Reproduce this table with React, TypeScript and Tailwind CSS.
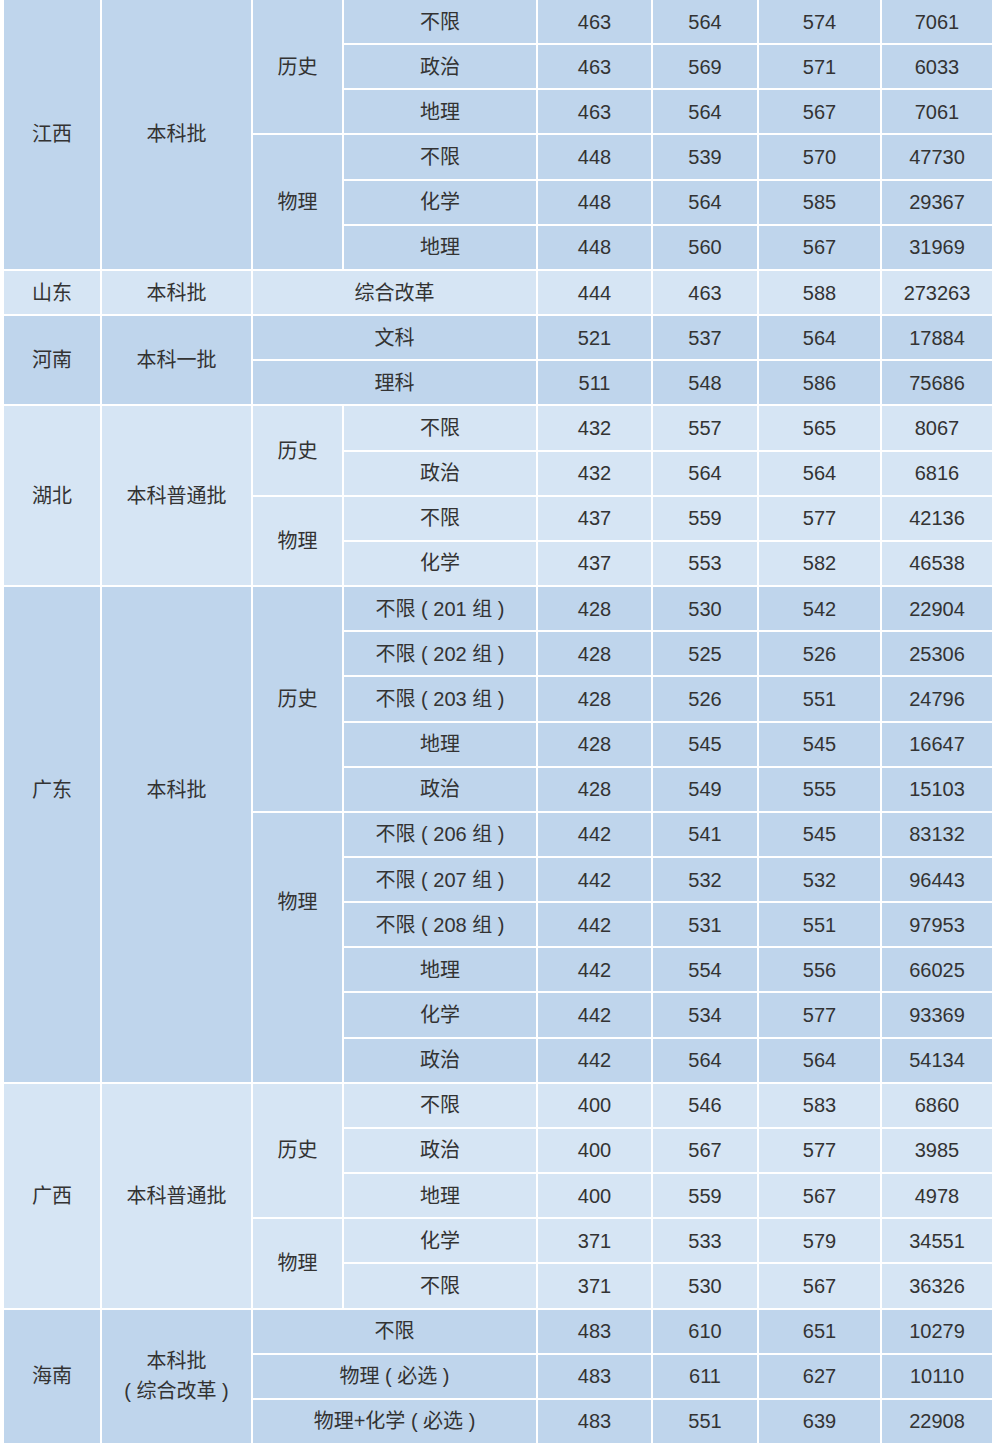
type Row = { sub: string; v: [string, string, string, string] }
type Sub = { name?: string; lift?: string; rows: Row[] }
type Group = { prov: string; batch: string[]; dark: boolean; lift?: string; subs: Sub[] }

const groups: Group[] = [
  {
    prov: '江西', batch: ['本科批'], dark: true,
    subs: [
      { name: '历史', rows: [
        { sub: '不限', v: ['463', '564', '574', '7061'] },
        { sub: '政治', v: ['463', '569', '571', '6033'] },
        { sub: '地理', v: ['463', '564', '567', '7061'] },
      ] },
      { name: '物理', rows: [
        { sub: '不限', v: ['448', '539', '570', '47730'] },
        { sub: '化学', v: ['448', '564', '585', '29367'] },
        { sub: '地理', v: ['448', '560', '567', '31969'] },
      ] },
    ],
  },
  {
    prov: '山东', batch: ['本科批'], dark: false,
    subs: [{ rows: [{ sub: '综合改革', v: ['444', '463', '588', '273263'] }] }],
  },
  {
    prov: '河南', batch: ['本科一批'], dark: true,
    subs: [{ rows: [
      { sub: '文科', v: ['521', '537', '564', '17884'] },
      { sub: '理科', v: ['511', '548', '586', '75686'] },
    ] }],
  },
  {
    prov: '湖北', batch: ['本科普通批'], dark: false,
    subs: [
      { name: '历史', rows: [
        { sub: '不限', v: ['432', '557', '565', '8067'] },
        { sub: '政治', v: ['432', '564', '564', '6816'] },
      ] },
      { name: '物理', rows: [
        { sub: '不限', v: ['437', '559', '577', '42136'] },
        { sub: '化学', v: ['437', '553', '582', '46538'] },
      ] },
    ],
  },
  {
    prov: '广东', batch: ['本科批'], dark: true, lift: 'pb-[88px]',
    subs: [
      { name: '历史', rows: [
        { sub: '不限 ( 201 组 )', v: ['428', '530', '542', '22904'] },
        { sub: '不限 ( 202 组 )', v: ['428', '525', '526', '25306'] },
        { sub: '不限 ( 203 组 )', v: ['428', '526', '551', '24796'] },
        { sub: '地理', v: ['428', '545', '545', '16647'] },
        { sub: '政治', v: ['428', '549', '555', '15103'] },
      ] },
      { name: '物理', lift: 'pb-[90px]', rows: [
        { sub: '不限 ( 206 组 )', v: ['442', '541', '545', '83132'] },
        { sub: '不限 ( 207 组 )', v: ['442', '532', '532', '96443'] },
        { sub: '不限 ( 208 组 )', v: ['442', '531', '551', '97953'] },
        { sub: '地理', v: ['442', '554', '556', '66025'] },
        { sub: '化学', v: ['442', '534', '577', '93369'] },
        { sub: '政治', v: ['442', '564', '564', '54134'] },
      ] },
    ],
  },
  {
    prov: '广西', batch: ['本科普通批'], dark: false,
    subs: [
      { name: '历史', rows: [
        { sub: '不限', v: ['400', '546', '583', '6860'] },
        { sub: '政治', v: ['400', '567', '577', '3985'] },
        { sub: '地理', v: ['400', '559', '567', '4978'] },
      ] },
      { name: '物理', rows: [
        { sub: '化学', v: ['371', '533', '579', '34551'] },
        { sub: '不限', v: ['371', '530', '567', '36326'] },
      ] },
    ],
  },
  {
    prov: '海南', batch: ['本科批', '( 综合改革 )'], dark: true,
    subs: [{ rows: [
      { sub: '不限', v: ['483', '610', '651', '10279'] },
      { sub: '物理 ( 必选 )', v: ['483', '611', '627', '10110'] },
      { sub: '物理+化学 ( 必选 )', v: ['483', '551', '639', '22908'] },
    ] }],
  },
]

const span: Record<number, string> = {
  1: 'row-span-1', 2: 'row-span-2', 3: 'row-span-3', 4: 'row-span-4', 5: 'row-span-5',
  6: 'row-span-6', 7: 'row-span-7', 8: 'row-span-8', 9: 'row-span-9', 10: 'row-span-10',
  11: 'row-span-11',
}

function Cell({ dark, className = '', children }: { dark: boolean; className?: string; children: React.ReactNode }) {
  return (
    <div className={`flex flex-col items-center justify-center whitespace-pre text-center leading-[30px] ${dark ? 'bg-[#bfd5ec]' : 'bg-[#d6e5f4]'} ${className}`}>
      {children}
    </div>
  )
}

export default function App() {
  return (
    <div
      className="grid h-[1443px] w-[992px] grid-cols-[96px_149px_89px_192px_113px_104px_121px_110px] grid-rows-[repeat(32,1fr)] gap-[2px] bg-white pl-[4px] text-[20px] text-[#333]"
      style={{ fontFamily: '"Liberation Sans", "Noto Sans CJK SC", sans-serif' }}
    >
      {groups.map((g) => {
        const total = g.subs.reduce((n, s) => n + s.rows.length, 0)
        return [
          <Cell key={g.prov + '-p'} dark={g.dark} className={`${span[total]} ${g.lift ?? ''}`}>{g.prov}</Cell>,
          <Cell key={g.prov + '-b'} dark={g.dark} className={`${span[total]} ${g.lift ?? ''}`}>
            {g.batch.map((b) => <span key={b}>{b}</span>)}
          </Cell>,
          ...g.subs.flatMap((s, si) =>
            s.rows.flatMap((r, ri) => {
              const cells = []
              if (s.name && ri === 0) {
                cells.push(
                  <Cell key={`${g.prov}-${si}-n`} dark={g.dark} className={`${span[s.rows.length]} ${s.lift ?? ''}`}>
                    {s.name}
                  </Cell>,
                )
              }
              cells.push(
                <Cell key={`${g.prov}-${si}-${ri}-s`} dark={g.dark} className={s.name ? '' : 'col-span-2'}>
                  {r.sub}
                </Cell>,
              )
              r.v.forEach((v, vi) =>
                cells.push(<Cell key={`${g.prov}-${si}-${ri}-${vi}`} dark={g.dark}>{v}</Cell>),
              )
              return cells
            }),
          ),
        ]
      })}
    </div>
  )
}
